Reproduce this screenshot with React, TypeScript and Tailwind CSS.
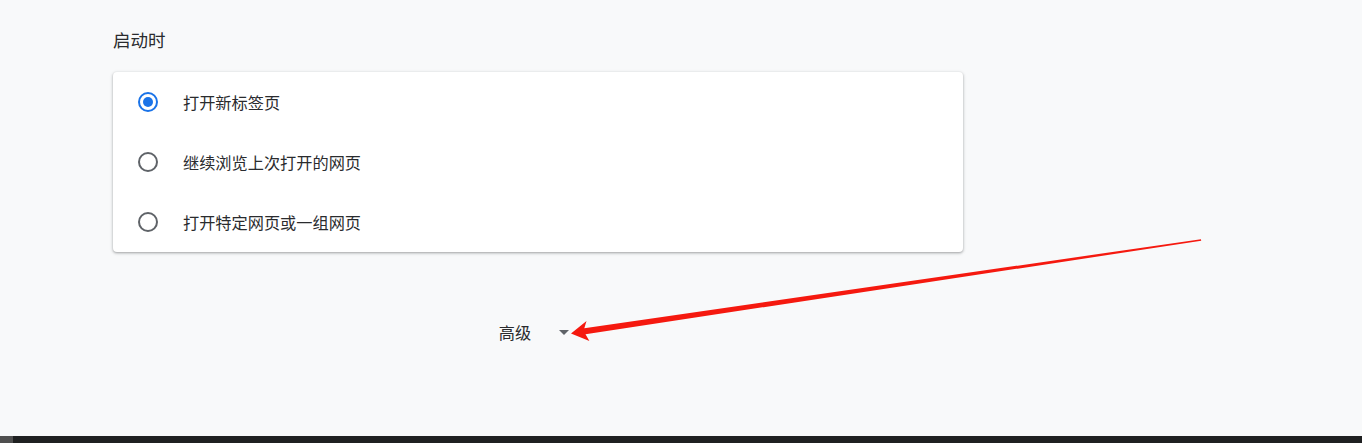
const options = ["打开新标签页", "继续浏览上次打开的网页", "打开特定网页或一组网页"];

function Radio({ checked }: { checked: boolean }) {
  return (
    <span
      className={`flex size-5 shrink-0 items-center justify-center rounded-full border-2 ${
        checked ? "border-[#1a73e8]" : "border-[#5f6368]"
      }`}
    >
      {checked ? <span className="size-[10px] rounded-full bg-[#1a73e8]" /> : null}
    </span>
  );
}

export default function App() {
  return (
    <div
      className="relative flex h-[443px] w-full flex-col overflow-hidden bg-[#f8f9fa] text-[#202124]"
      style={{ fontFamily: '"Noto Sans CJK SC", "Noto Sans", sans-serif' }}
    >
      <main className="flex-1 pl-[113px] pt-[28px]">
        <h2 className="text-[17.5px] leading-6 font-normal text-[#2a2b2e]">启动时</h2>

        <section className="mt-[20px] w-[850px] rounded bg-white shadow-[0_1px_2px_rgba(60,64,67,0.3),0_1px_3px_1px_rgba(60,64,67,0.15)]">
          {options.map((label, index) => (
            <div key={label} className="flex h-[60px] items-center gap-[25px] px-[25px]">
              <Radio checked={index === 0} />
              <span className="text-[16.2px] leading-6 text-[#2a2b2e]">{label}</span>
            </div>
          ))}
        </section>

        <div className="mt-[68px] flex w-[850px] items-center justify-center gap-[28px] pr-[8px]">
          <span className="text-[16.2px] leading-6 text-[#2a2b2e]">高级</span>
          <svg width="10" height="5" viewBox="0 0 10 5" className="mt-[1px]">
            <path d="M0 0 L10 0 L5 5 Z" fill="#5f6368" />
          </svg>
        </div>
      </main>

      <footer className="flex h-[7px] shrink-0 bg-[#1f2021]">
        <div className="w-[13px] bg-[#4f4f4f]" />
      </footer>

      {/* annotation arrow drawn over the page */}
      <svg className="pointer-events-none absolute inset-0" width="1362" height="443">
        <polygon
          points="571,333.5 586.5,320.9 584.3,328.2 1201,239.2 1201.2,240.8 585.5,334.2 589.4,341"
          fill="#f5190f"
        />
      </svg>
    </div>
  );
}
